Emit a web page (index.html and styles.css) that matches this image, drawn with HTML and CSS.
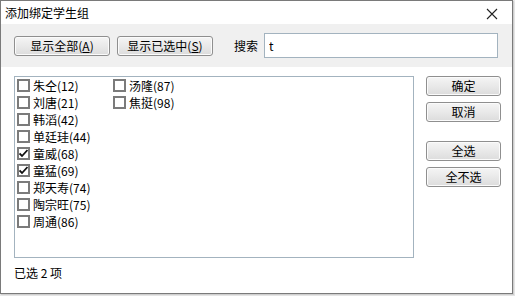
FILE: index.html
```html
<!DOCTYPE html>
<html lang="zh-CN">
  <head>
    <meta charset="UTF-8" />
    <title>添加绑定学生组</title>
    <link rel="stylesheet" href="styles.css">
  </head>
  <body>
    <div class="window">
      <div class="titlebar">
        <span class="title">添加绑定学生组</span>
        <svg class="close" width="12" height="12" viewBox="0 0 12 12">
          <path d="M1 1 L11 11 M11 1 L1 11" stroke="#222" stroke-width="1.1" fill="none" />
        </svg>
      </div>

      <div class="toolbar">
        <button class="btn wide">显示全部(<u>A</u>)</button>
        <button class="btn wide">显示已选中(<u>S</u>)</button>
        <label class="search-label" for="search">搜索</label>
        <input id="search" class="search" type="text" value="t" />
      </div>

      <div class="main">
        <div class="listbox">
          <div class="item"><span class="box"></span>朱仝(12)</div>
          <div class="item"><span class="box"></span>刘唐(21)</div>
          <div class="item"><span class="box"></span>韩滔(42)</div>
          <div class="item"><span class="box"></span>单廷珪(44)</div>
          <div class="item"><span class="box checked"><svg width="9" height="9" viewBox="0 0 9 9"><path d="M0.5 4.5 L3 7 L8.5 1" stroke="#111" stroke-width="1.8" fill="none" /></svg></span>童威(68)</div>
          <div class="item"><span class="box checked"><svg width="9" height="9" viewBox="0 0 9 9"><path d="M0.5 4.5 L3 7 L8.5 1" stroke="#111" stroke-width="1.8" fill="none" /></svg></span>童猛(69)</div>
          <div class="item"><span class="box"></span>郑天寿(74)</div>
          <div class="item"><span class="box"></span>陶宗旺(75)</div>
          <div class="item"><span class="box"></span>周通(86)</div>
          <div class="item"><span class="box"></span>汤隆(87)</div>
          <div class="item"><span class="box"></span>焦挺(98)</div>
        </div>

        <div class="side">
          <button class="btn side-btn">确定</button>
          <button class="btn side-btn">取消</button>
          <button class="btn side-btn group">全选</button>
          <button class="btn side-btn">全不选</button>
        </div>
      </div>

      <div class="status">已选 2 项</div>
    </div>
  </body>
</html>
```

FILE: styles.css
```css
body {
  margin: 0;
  width: 515px;
  height: 296px;
  background: #e8e8e8;
  font-family: "Noto Sans CJK SC", "DejaVu Sans", sans-serif;
  font-size: 12px;
  color: #000;
}

.window {
  width: 511px;
  height: 292px;
  border: 1px solid #7a7a7a;
  background: #fff;
  box-shadow: 1px 1px 0 #cfcfcf, 2px 2px 0 #e4e4e4;
  display: flex;
  flex-direction: column;
}

.titlebar {
  height: 23px;
  display: flex;
  align-items: center;
  justify-content: space-between;
  padding: 0 14px 0 4px;
}

.title {
  line-height: 23px;
}

.close {
  margin-top: 2px;
}

.toolbar {
  height: 43px;
  background: #f0f0f0;
  display: flex;
  align-items: center;
  padding: 0 14px 0 13px;
}

.btn {
  font-family: inherit;
  font-size: 12px;
  color: #000;
  height: 20px;
  padding: 0;
  border: 1px solid #8f8f8f;
  border-radius: 3px;
  background: linear-gradient(#f5f5f5, #e9e9e9 50%, #dcdcdc);
  box-shadow: inset 0 0 0 1px #fbfbfb;
  line-height: 18px;
}

.btn u {
  text-underline-offset: 1px;
}

.wide {
  width: 96px;
  margin-right: 7px;
}

.search-label {
  margin-left: 14px;
  margin-right: 6px;
}

.search {
  flex: 1;
  height: 25px;
  box-sizing: border-box;
  border: 1px solid #a3b3bf;
  padding: 0 4px;
  font-family: "Noto Sans CJK SC", sans-serif;
  font-size: 12px;
  outline: none;
}

.main {
  display: flex;
  padding: 9px 0 0 13px;
}

.listbox {
  width: 394px;
  height: 180px;
  border: 1px solid #a3b3bf;
  padding: 0 2px;
  display: grid;
  grid-template-rows: repeat(9, 17px);
  grid-auto-flow: column;
  grid-auto-columns: 96px;
  align-content: start;
  justify-content: start;
}

.item {
  display: flex;
  align-items: center;
  gap: 3px;
  white-space: nowrap;
  line-height: 17px;
}

.box {
  width: 9px;
  height: 9px;
  border: 2px solid #7b7b7b;
  background: #fff;
  display: flex;
  align-items: center;
  justify-content: center;
}

.side {
  display: flex;
  flex-direction: column;
  margin-left: 12px;
}

.side-btn {
  width: 75px;
  margin-bottom: 6px;
}

.side-btn.group {
  margin-top: 13px;
}

.status {
  padding: 7px 0 0 13px;
  line-height: 16px;
}
```
